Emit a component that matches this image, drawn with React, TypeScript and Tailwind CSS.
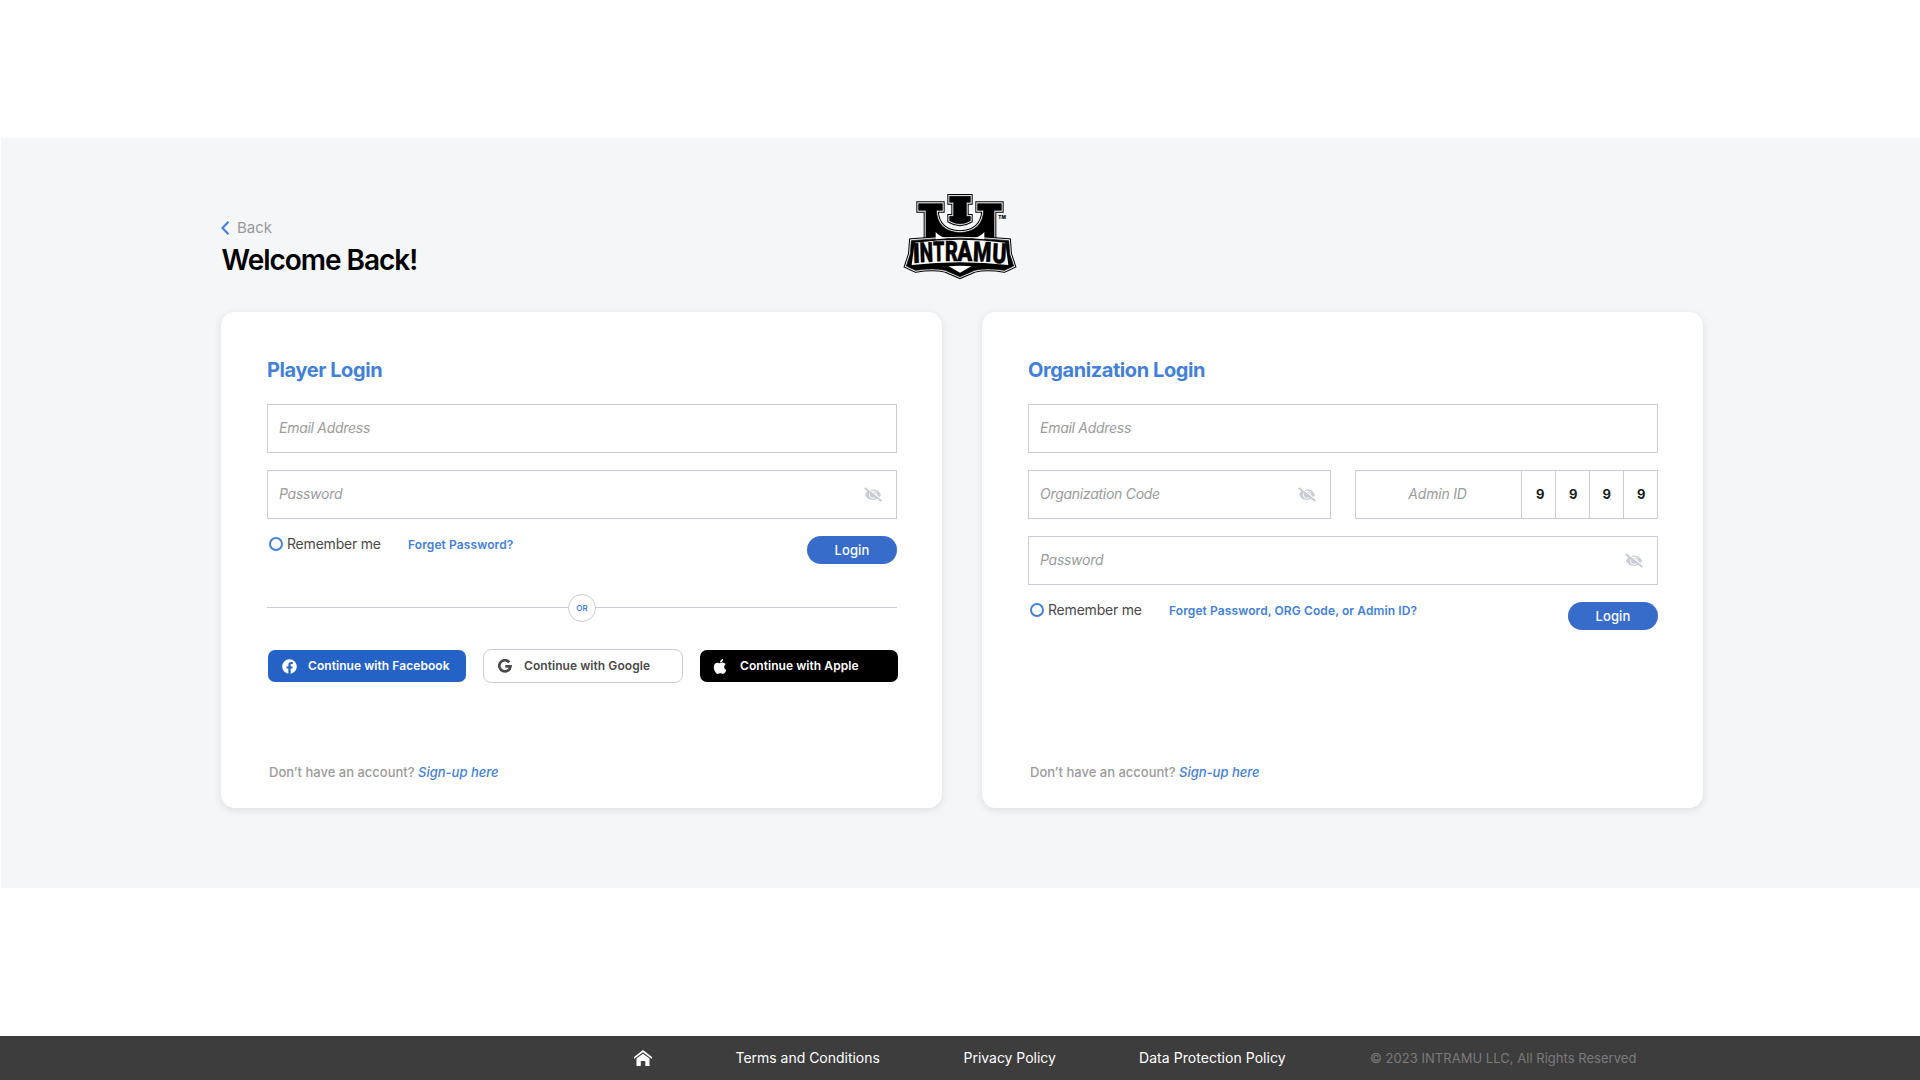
import type { ReactNode } from "react";
import { FaApple, FaFacebook } from "react-icons/fa";

function Logo() {
  const plate =
    "M64 182 Q210 167 356 182 L359 222 L371 258 L343 271 Q290 263 254 271 L210 290 L166 271 Q130 263 77 271 L49 258 L61 222 Z";
  const u =
    "M86 71 H157 V91 H139 Q142 155 210 158 Q278 155 281 91 H263 V71 H334 V91 H312 V180 H108 V91 H86 Z";
  const i =
    "M179 49 H241 V67 H229 V109 H241 V122 Q210 141 179 122 V109 H191 V67 H179 Z";
  const layers: [string, number][] = [
    ["#000", 14],
    ["#f5f6f8", 8],
    ["#000", 2],
  ];
  const letters: [string, number, number, number, number][] = [
    ["I", 69, 249, 22, -2],
    ["N", 90, 247, 40, -2],
    ["T", 130, 244, 34, -1],
    ["R", 165, 242, 39, 0],
    ["A", 202, 242, 45, 0],
    ["M", 248, 244, 55, 2],
    ["U", 305, 248, 43, 3],
  ];
  return (
    <svg width="140" height="110" viewBox="0 0 420 330" aria-label="INTRAMU">
      {[u, i, plate].map((d) =>
        layers.map(([color, width]) => (
          <path key={d + width} d={d} fill={color} stroke={color} strokeWidth={width} />
        )),
      )}
      <path d="M137 156 Q150 171 170 175 L137 178 Z M283 156 Q270 171 250 175 L283 178 Z" fill="#fff" />
      <path d="M74 188 Q210 171 346 188 L355 255 Q210 238 65 255 Z" fill="#fff" />
      <path d="M176 259 Q210 256 244 259 L210 278 Z" fill="#fff" />
      {letters.map(([c, x, y, w, r]) => (
        <text
          key={c}
          x={x}
          y={y}
          transform={`rotate(${r} ${x} ${y})`}
          textLength={w}
          lengthAdjust="spacingAndGlyphs"
          fontFamily="Roboto"
          fontWeight="900"
          fontSize="83"
          stroke="#000"
          strokeWidth="1.5"
        >
          {c}
        </text>
      ))}
      <text x="325" y="117" fontFamily="Inter" fontWeight="800" fontSize="14">
        TM
      </text>
    </svg>
  );
}

function EyeOff() {
  return (
    <svg width="18" height="15" viewBox="0 0 18 15" className="shrink-0">
      <path d="M1 7.8C2.6 4.4 5.5 2.5 9 2.5s6.400 1.900 8 5.300c-1.600 3.400-4.500 5.200-8 5.200S2.600 11.200 1 7.800Z" fill="#c9ccd2" />
      <circle cx="9" cy="7.700" r="3.700" fill="none" stroke="#fff" strokeWidth="1" />
      <path d="M1.200 -.3 L18.500 13.200" stroke="#fff" strokeWidth="1.400" />
      <path d="M.6 .9 L17.400 14.100" stroke="#c9ccd2" strokeWidth="1.900" />
    </svg>
  );
}

function Field({ label, eye, width = "w-[630px]" }: { label: string; eye?: boolean; width?: string }) {
  return (
    <div className={`flex h-[49px] items-center justify-between border border-[#c9ccd2] pl-[11px] pr-[14.5px] ${width}`}>
      <span className="-mt-px text-[14px] leading-5 tracking-[-0.28px] text-[#9b9b9b] italic">{label}</span>
      {eye && <EyeOff />}
    </div>
  );
}

function LoginRow({ forget }: { forget: string }) {
  return (
    <div className="mt-[17px] flex h-7 w-[630px]">
      <span className="mt-px ml-[2px] size-[14px] rounded-full border-2 border-[#4380d8]" />
      <span className="-mt-[2px] ml-1 w-[121px] text-[14px] leading-5 tracking-[-0.2px] whitespace-nowrap text-[#4a4a4a]">
        Remember me
      </span>
      <span className="-mt-px text-[12px] leading-5 font-semibold tracking-[0.1px] whitespace-nowrap text-[#4380d8]">
        {forget}
      </span>
      <button className="ml-auto h-7 w-[90px] rounded-full bg-[#386ccb] pt-px text-[13px] font-medium tracking-[0.1px] text-white">
        Login
      </button>
    </div>
  );
}

function Card({ title, children }: { title: string; children: ReactNode }) {
  return (
    <section className="flex h-[496px] w-[721px] flex-col rounded-[14px] bg-white pt-11 pl-[46px] shadow-[0_2px_8px_rgba(0,0,0,0.10)]">
      <h2 className="mb-5 h-7 text-[20px] leading-7 font-bold tracking-[-0.42px] text-[#4380d8]">{title}</h2>
      {children}
      <p className="mt-auto mb-[26px] ml-[2px] text-[13px] leading-5 font-medium text-[#9b9b9b]">
        Don’t have an account? <span className="text-[#4380d8] italic">Sign-up here</span>
      </p>
    </section>
  );
}

function GoogleIcon() {
  return (
    <svg width="14" height="14" viewBox="0 0 14 14">
      <path d="M11.300 3.300A5.600 5.600 0 1 0 12.500 7.300H7.300" fill="none" stroke="#4a4a4a" strokeWidth="2.700" />
    </svg>
  );
}

export default function App() {
  return (
    <div className="flex h-[1080px] w-[1920px] flex-col bg-white font-['Inter',sans-serif]">
      <main className="mt-[138px] ml-px h-[750px] bg-[#f5f6f8] pt-[42px] pl-[220px]">
        <header className="flex h-[132px]">
          <div className="w-[669px] pt-[37px]">
            <div className="flex h-[22px] items-center">
              <svg width="9" height="14" viewBox="0 0 9 14">
                <path d="M7.500 .8 L1.500 7 L7.500 13.200" fill="none" stroke="#4380d8" strokeWidth="2.100" />
              </svg>
              <span className="ml-[7px] text-[15px] leading-5 text-[#999]">Back</span>
            </div>
            <h1 className="mt-[3px] ml-[0.5px] text-[28px] leading-9 font-semibold tracking-[-1.02px] text-black">
              Welcome Back!
            </h1>
          </div>
          <Logo />
        </header>
        <div className="flex gap-10">
          <Card title="Player Login">
            <div className="flex flex-col gap-[17px]">
              <Field label="Email Address" />
              <Field label="Password" eye />
            </div>
            <LoginRow forget="Forget Password?" />
            <div className="mt-[30px] flex h-7 w-[630px] items-center">
              <span className="-mt-px h-px flex-1 bg-[#c9ccd2]" />
              <span className="flex size-7 items-center justify-center rounded-full border border-[#c9ccd2] text-[8px] font-semibold text-[#4380d8]">
                OR
              </span>
              <span className="-mt-px h-px flex-1 bg-[#c9ccd2]" />
            </div>
            <div className="mt-[27px] ml-px flex h-[34px] items-center gap-[17px] text-[12px] font-semibold tracking-[0.06px]">
              <button className="flex h-8 w-[198px] items-center rounded-[7px] bg-[#2462c6] pl-[13.5px] text-white">
                <FaFacebook size={15} />
                <span className="ml-[11.5px] whitespace-nowrap">Continue with Facebook</span>
              </button>
              <button className="flex h-[34px] w-[200px] items-center rounded-[8px] border border-[#c9ccd2] pl-[14px] text-[#4a4a4a]">
                <GoogleIcon />
                <span className="ml-[12px] whitespace-nowrap">Continue with Google</span>
              </button>
              <button className="flex h-8 w-[198px] items-center rounded-[7px] bg-black pl-[13px] text-white">
                <FaApple size={17} className="w-[14px]" />
                <span className="ml-[13px] whitespace-nowrap">Continue with Apple</span>
              </button>
            </div>
          </Card>
          <Card title="Organization Login">
            <div className="flex flex-col gap-[17px]">
              <Field label="Email Address" />
              <div className="flex gap-6">
                <Field label="Organization Code" eye width="w-[303px]" />
                <div className="flex h-[49px] w-[303px] items-center border border-[#c9ccd2]">
                  <span className="-mt-[2px] mr-[2px] w-[163px] text-center text-[14px] leading-5 tracking-[-0.2px] text-[#9b9b9b] italic">
                    Admin ID
                  </span>
                  {["pl-[14px]", "pl-[13px]", "pl-[12.5px]", "pl-[13px]"].map((pad, n) => (
                    <span
                      key={n}
                      className={`flex h-full w-[34px] items-center border-l border-[#c9ccd2] text-[13px] font-bold text-[#1a1a1a] ${pad}`}
                    >
                      9
                    </span>
                  ))}
                </div>
              </div>
              <Field label="Password" eye />
            </div>
            <LoginRow forget="Forget Password, ORG Code, or Admin ID?" />
          </Card>
        </div>
      </main>
      <footer className="mt-auto flex h-11 items-center bg-[#3d3d3d] text-[14px] leading-5 whitespace-nowrap text-white">
        <svg width="18" height="16" viewBox="0 0 18 16" className="ml-[633.5px]">
          <path d="M9 0 L18 7 V9 L9 2.300 L0 9 V7 Z M9 3.800 L15.500 8.500 V16 H11.300 V11 H6.800 V16 H2.500 V8.500 Z" fill="#fff" />
        </svg>
        <span className="ml-[84px] w-[228px] tracking-[-0.02px]">Terms and Conditions</span>
        <span className="w-[175.5px] tracking-[-0.02px]">Privacy Policy</span>
        <span className="w-[231px] tracking-[0.05px]">Data Protection Policy</span>
        <span className="-mt-px text-[13px] tracking-[0.03px] text-[#7b7b7b]">© 2023 INTRAMU LLC, All Rights Reserved</span>
      </footer>
    </div>
  );
}
